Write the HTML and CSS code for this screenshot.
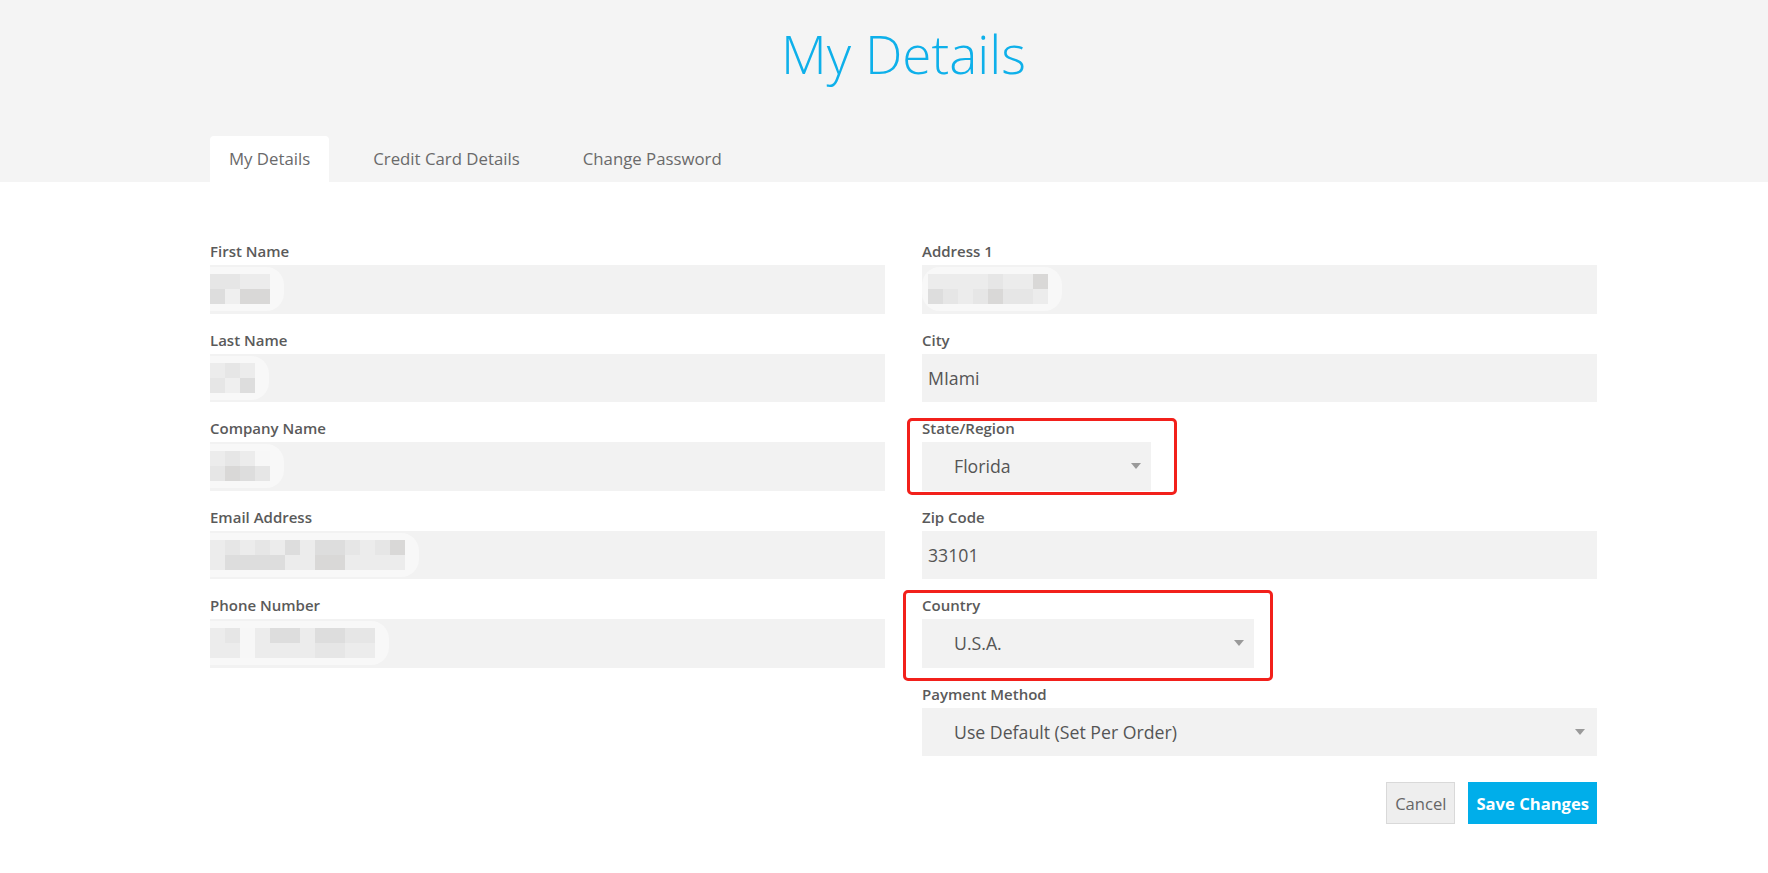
FILE: index.html
```html
<!DOCTYPE html>
<html lang="en">
<head>
<meta charset="utf-8">
<title>My Details</title>
<link rel="stylesheet" href="styles.css">
</head>
<body>
<header class="hero">
  <div class="wrap">
    <h1 class="title">My Details</h1>
    <nav class="tabs">
      <a class="tab active">My Details</a>
      <a class="tab">Credit Card Details</a>
      <a class="tab">Change Password</a>
    </nav>
  </div>
</header>
<main class="wrap">
  <form class="form">
    <div class="col">
      <div class="field">
        <label class="label">First Name</label>
        <div class="control input masked">
          <span class="redact"><i class="c2"></i><i class="c3"></i><i class="c2"></i><i class="c5"></i><i class="c1"></i><i class="c4"></i><i class="c1"></i><i class="c4"></i></span>
        </div>
      </div>
      <div class="field">
        <label class="label">Last Name</label>
        <div class="control input masked">
          <span class="redact"><i class="c1"></i><i class="c2"></i><i class="c2"></i><i class="c5"></i><i class="c1"></i><i class="c3"></i></span>
        </div>
      </div>
      <div class="field">
        <label class="label">Company Name</label>
        <div class="control input masked">
          <span class="redact"><i class="c1"></i><i class="c2"></i><i class="c2"></i><i class="c4"></i><i class="c1"></i><i class="c3"></i><i class="c0"></i><i class="c2"></i></span>
        </div>
      </div>
      <div class="field">
        <label class="label">Email Address</label>
        <div class="control input masked">
          <span class="redact"><i class="c1"></i><i class="c1"></i><i class="c2"></i><i class="c3"></i><i class="c1"></i><i class="c3"></i><i class="c2"></i><i class="c3"></i><i class="c1"></i><i class="c3"></i><i class="c3"></i><i class="c1"></i><i class="c1"></i><i class="c1"></i><i class="c3"></i><i class="c4"></i><i class="c3"></i><i class="c4"></i><i class="c2"></i><i class="c1"></i><i class="c1"></i><i class="c1"></i><i class="c2"></i><i class="c1"></i><i class="c4"></i><i class="c1"></i></span>
        </div>
      </div>
      <div class="field">
        <label class="label">Phone Number</label>
        <div class="control input masked">
          <span class="redact"><i class="c1"></i><i class="c1"></i><i class="c2"></i><i class="c1"></i><i class="c0"></i><i class="c0"></i><i class="c1"></i><i class="c1"></i><i class="c3"></i><i class="c1"></i><i class="c3"></i><i class="c1"></i><i class="c1"></i><i class="c1"></i><i class="c3"></i><i class="c2"></i><i class="c3"></i><i class="c2"></i><i class="c2"></i><i class="c1"></i><i class="c2"></i><i class="c1"></i></span>
        </div>
      </div>
    </div>

    <div class="col">
      <div class="field">
        <label class="label">Address 1</label>
        <div class="control input">
          <span class="redact soft"><i class="c1"></i><i class="c3"></i><i class="c1"></i><i class="c2"></i><i class="c1"></i><i class="c1"></i><i class="c1"></i><i class="c2"></i><i class="c2"></i><i class="c4"></i><i class="c1"></i><i class="c2"></i><i class="c1"></i><i class="c2"></i><i class="c4"></i><i class="c1"></i></span>
        </div>
      </div>
      <div class="field">
        <label class="label">City</label>
        <div class="control input">MIami</div>
      </div>
      <div class="field">
        <label class="label">State/Region</label>
        <div class="control select w-state"><span>Florida</span><span class="caret"></span></div>
        <span class="mark mark-state"></span>
      </div>
      <div class="field">
        <label class="label">Zip Code</label>
        <div class="control input">33101</div>
      </div>
      <div class="field">
        <label class="label">Country</label>
        <div class="control select w-country"><span>U.S.A.</span><span class="caret"></span></div>
        <span class="mark mark-country"></span>
      </div>
      <div class="field">
        <label class="label">Payment Method</label>
        <div class="control select pay"><span>Use Default (Set Per Order)</span><span class="caret"></span></div>
      </div>
      <div class="actions">
        <button type="button" class="btn btn-cancel">Cancel</button>
        <button type="button" class="btn btn-save">Save Changes</button>
      </div>
    </div>
  </form>
</main>
</body>
</html>
```

FILE: styles.css
```css
html, body {
  margin: 0;
  padding: 0;
}
body {
  font-family: "Open Sans", "Noto Sans", sans-serif;
  background: #ffffff;
  color: #555555;
}

.wrap {
  width: 1387px;
  margin-left: 210px;
}

.hero {
  background: #f4f4f4;
  height: 182px;
  box-sizing: border-box;
  padding-top: 16px;
}

.title {
  margin: 0;
  text-align: center;
  font-size: 53px;
  font-weight: 300;
  line-height: 76px;
  color: #0eb0ea;
}

.tabs {
  display: flex;
  gap: 25px;
  margin-top: 44px;
}

.tab {
  display: block;
  padding: 0 19px;
  height: 46px;
  line-height: 46px;
  font-size: 16.8px;
  color: #6a6a6a;
  border-radius: 4px 4px 0 0;
}

.tab.active {
  background: #ffffff;
}

.form {
  display: grid;
  grid-template-columns: 675px 675px;
  column-gap: 37px;
  align-items: start;
  padding-top: 59px;
  margin: 0;
}

.col {
  display: flex;
  flex-direction: column;
  gap: 16px;
}

.field {
  position: relative;
}

.label {
  display: block;
  font-size: 15px;
  font-weight: 600;
  line-height: 20px;
  color: #5a5a5a;
  margin-bottom: 4px;
}

.control {
  height: 48.5px;
  box-sizing: border-box;
  background: #f2f2f2;
  display: flex;
  align-items: center;
  font-size: 17.7px;
  color: #555555;
}

.input {
  padding-left: 6px;
}

.input.masked {
  padding-left: 0;
}

.select {
  justify-content: space-between;
  padding: 0 10px 0 32px;
}

.select.pay {
  padding-right: 12px;
}

.w-state {
  width: 229px;
}

.w-country {
  width: 332px;
}

.caret {
  width: 0;
  height: 0;
  border-left: 5px solid transparent;
  border-right: 5px solid transparent;
  border-top: 6px solid #9a9a9a;
}

.redact {
  display: grid;
  grid-auto-flow: column;
  grid-template-rows: 15px 15px;
  grid-auto-columns: 15px;
  padding: 7px 14px 7px 0;
  background: #f8f8f8;
  border-radius: 0 18px 18px 0;
}

.redact.soft {
  padding-left: 6px;
  margin-left: -6px;
  border-radius: 18px;
}

.redact i {
  display: block;
}

.c0 { background: #f7f7f7; }
.c1 { background: #ececec; }
.c2 { background: #e6e6e6; }
.c3 { background: #dddddd; }
.c4 { background: #d9d8d7; }
.c5 { background: #efefef; }

.mark {
  position: absolute;
  box-sizing: border-box;
  border: 3px solid #f2201b;
  border-radius: 5px;
  pointer-events: none;
}

.mark-state {
  left: -15px;
  top: 0;
  width: 270px;
  height: 77px;
}

.mark-country {
  left: -19px;
  top: -5px;
  width: 370px;
  height: 91px;
}

.actions {
  display: flex;
  justify-content: flex-end;
  gap: 13px;
  margin-top: 10px;
}

.btn {
  height: 42px;
  padding: 0 8px;
  font-family: inherit;
  font-size: 16.6px;
  border: 0;
  cursor: pointer;
}

.btn-cancel {
  background: #eeeeee;
  border: 1px solid #d9d9d9;
  color: #666666;
}

.btn-save {
  background: #00aeea;
  color: #ffffff;
  font-weight: 700;
}
```
